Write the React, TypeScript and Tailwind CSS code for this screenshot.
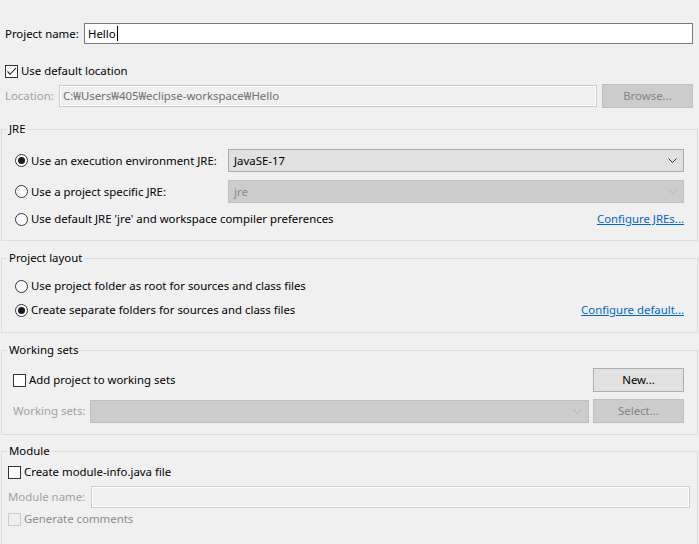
import React from 'react';

function Radio({ checked }: { checked?: boolean }) {
  return (
    <span className="flex h-[13px] w-[13px] shrink-0 items-center justify-center rounded-full border border-[#333333] bg-white">
      {checked && <span className="h-[7px] w-[7px] rounded-full bg-[#1a1a1a]" />}
    </span>
  );
}

function CheckBox({ checked, disabled }: { checked?: boolean; disabled?: boolean }) {
  return (
    <span
      className={`flex h-[13px] w-[13px] shrink-0 items-center justify-center border ${
        disabled ? 'border-[#cccccc] bg-[#f0f0f0]' : 'border-[#333333] bg-white'
      }`}
    >
      {checked && (
        <svg width="11" height="11" viewBox="0 0 11 11">
          <path d="M1.5 5.5 L4.2 8.3 L9.8 2.2" fill="none" stroke="#222" strokeWidth="1.1" />
        </svg>
      )}
    </span>
  );
}

function Chevron({ disabled }: { disabled?: boolean }) {
  return (
    <svg width="9" height="5" viewBox="0 0 9 5" className="shrink-0">
      <path d="M0.5 0.5 L4.5 4.5 L8.5 0.5" fill="none" stroke={disabled ? '#b4b4b4' : '#333'} strokeWidth="1" />
    </svg>
  );
}

function Combo({ value, disabled, className }: { value?: string; disabled?: boolean; className: string }) {
  return (
    <div
      className={`flex h-[23px] items-center justify-between border pl-[5px] pr-[6px] ${className} ${
        disabled ? 'border-[#bfbfbf] bg-[#cccccc] text-[#8b8b8b]' : 'border-[#adadad] bg-[#e1e1e1] text-black'
      }`}
    >
      <span>{value}</span>
      <Chevron disabled={disabled} />
    </div>
  );
}

function Button({ label, disabled }: { label: string; disabled?: boolean }) {
  return (
    <div
      className={`flex h-[24px] w-[91px] shrink-0 items-center justify-center border ${
        disabled ? 'border-[#bfbfbf] bg-[#cccccc] text-[#838383]' : 'border-[#adadad] bg-[#e1e1e1] text-black'
      }`}
    >
      {label}
    </div>
  );
}

function Group({ title, className, children }: { title: string; className?: string; children: React.ReactNode }) {
  return (
    <fieldset className={`ml-[1px] w-[697px] border border-[#dcdcdc] ${className ?? ''}`}>
      <legend className="ml-[5px] px-[2px] leading-[16px]">{title}</legend>
      {children}
    </fieldset>
  );
}

export default function App() {
  return (
    <div className="h-[544px] w-[699px] overflow-hidden bg-[#f0f0f0] pt-[23px] font-['Noto_Sans',sans-serif] text-[11.4px] leading-[16px] text-black">
      {/* Project name */}
      <div className="flex h-[21px] items-center">
        <span className="ml-[5px] w-[79px]">Project name:</span>
        <div className="flex h-[21px] w-[609px] items-center border border-[#7a7a7a] bg-white pl-[3px]">
          <span>Hello</span>
          <span className="ml-[1px] h-[15px] w-[1px] bg-black" />
        </div>
      </div>

      {/* Default location */}
      <div className="mt-[18px] flex h-[18px] items-center pl-[5px]">
        <CheckBox checked />
        <span className="ml-[3px]">Use default location</span>
      </div>

      <div className="mt-[4px] flex h-[24px] items-center">
        <span className="ml-[5px] w-[54px] text-[#a0a0a0]">Location:</span>
        <div className="flex h-[22px] w-[538px] items-center border border-[#cccccc] bg-[#f0f0f0] pl-[3px] text-[#6d6d6d] shadow-[inset_0_0_0_1px_#ffffff]">
          C:₩Users₩405₩eclipse-workspace₩Hello
        </div>
        <div className="ml-[5px]">
          <Button label="Browse..." disabled />
        </div>
      </div>

      {/* JRE */}
      <Group title="JRE" className="mt-[13px]">
        <div className="px-[13px] pt-[12px] pb-[10px]">
          <div className="flex h-[23px] items-center">
            <Radio checked />
            <span className="ml-[3px]">Use an execution environment JRE:</span>
            <Combo value="JavaSE-17" className="ml-auto w-[456px]" />
          </div>
          <div className="mt-[8px] flex h-[23px] items-center">
            <Radio />
            <span className="ml-[3px]">Use a project specific JRE:</span>
            <Combo value="jre" disabled className="ml-auto w-[456px]" />
          </div>
          <div className="mt-[5px] flex h-[22px] items-center">
            <Radio />
            <span className="ml-[3px]">Use default JRE 'jre' and workspace compiler preferences</span>
            <span className="ml-auto text-[#0066cc] underline">Configure JREs...</span>
          </div>
        </div>
      </Group>

      {/* Project layout */}
      <Group title="Project layout" className="mt-[9px]">
        <div className="px-[13px] pt-[10px] pb-[12px]">
          <div className="flex h-[20px] items-center">
            <Radio />
            <span className="ml-[3px]">Use project folder as root for sources and class files</span>
          </div>
          <div className="mt-[4px] flex h-[20px] items-center">
            <Radio checked />
            <span className="ml-[3px]">Create separate folders for sources and class files</span>
            <span className="ml-auto text-[#0066cc] underline">Configure default...</span>
          </div>
        </div>
      </Group>

      {/* Working sets */}
      <Group title="Working sets" className="mt-[9px]">
        <div className="pl-[11px] pr-[13px] pt-[10px] pb-[11px]">
          <div className="flex h-[24px] items-center">
            <CheckBox />
            <span className="ml-[3px]">Add project to working sets</span>
            <div className="ml-auto">
              <Button label="New..." />
            </div>
          </div>
          <div className="mt-[7px] flex h-[24px] items-center">
            <span className="w-[77px] text-[#a0a0a0]">Working sets:</span>
            <Combo disabled className="w-[499px]" />
            <div className="ml-auto">
              <Button label="Select..." disabled />
            </div>
          </div>
        </div>
      </Group>

      {/* Module */}
      <Group title="Module" className="mt-[8px] h-[120px]">
        <div className="pl-[6px] pr-[7px] pt-[5px]">
          <div className="flex h-[16px] items-center">
            <CheckBox />
            <span className="ml-[3px]">Create module-info.java file</span>
          </div>
          <div className="mt-[6px] flex h-[22px] items-center">
            <span className="w-[83px] text-[#a0a0a0]">Module name:</span>
            <div className="h-[22px] flex-1 border border-[#cccccc] bg-[#f0f0f0] shadow-[inset_0_0_0_1px_#ffffff]" />
          </div>
          <div className="mt-[3px] flex h-[16px] items-center">
            <CheckBox disabled />
            <span className="ml-[3px] text-[#8b8b8b]">Generate comments</span>
          </div>
        </div>
      </Group>
    </div>
  );
}
